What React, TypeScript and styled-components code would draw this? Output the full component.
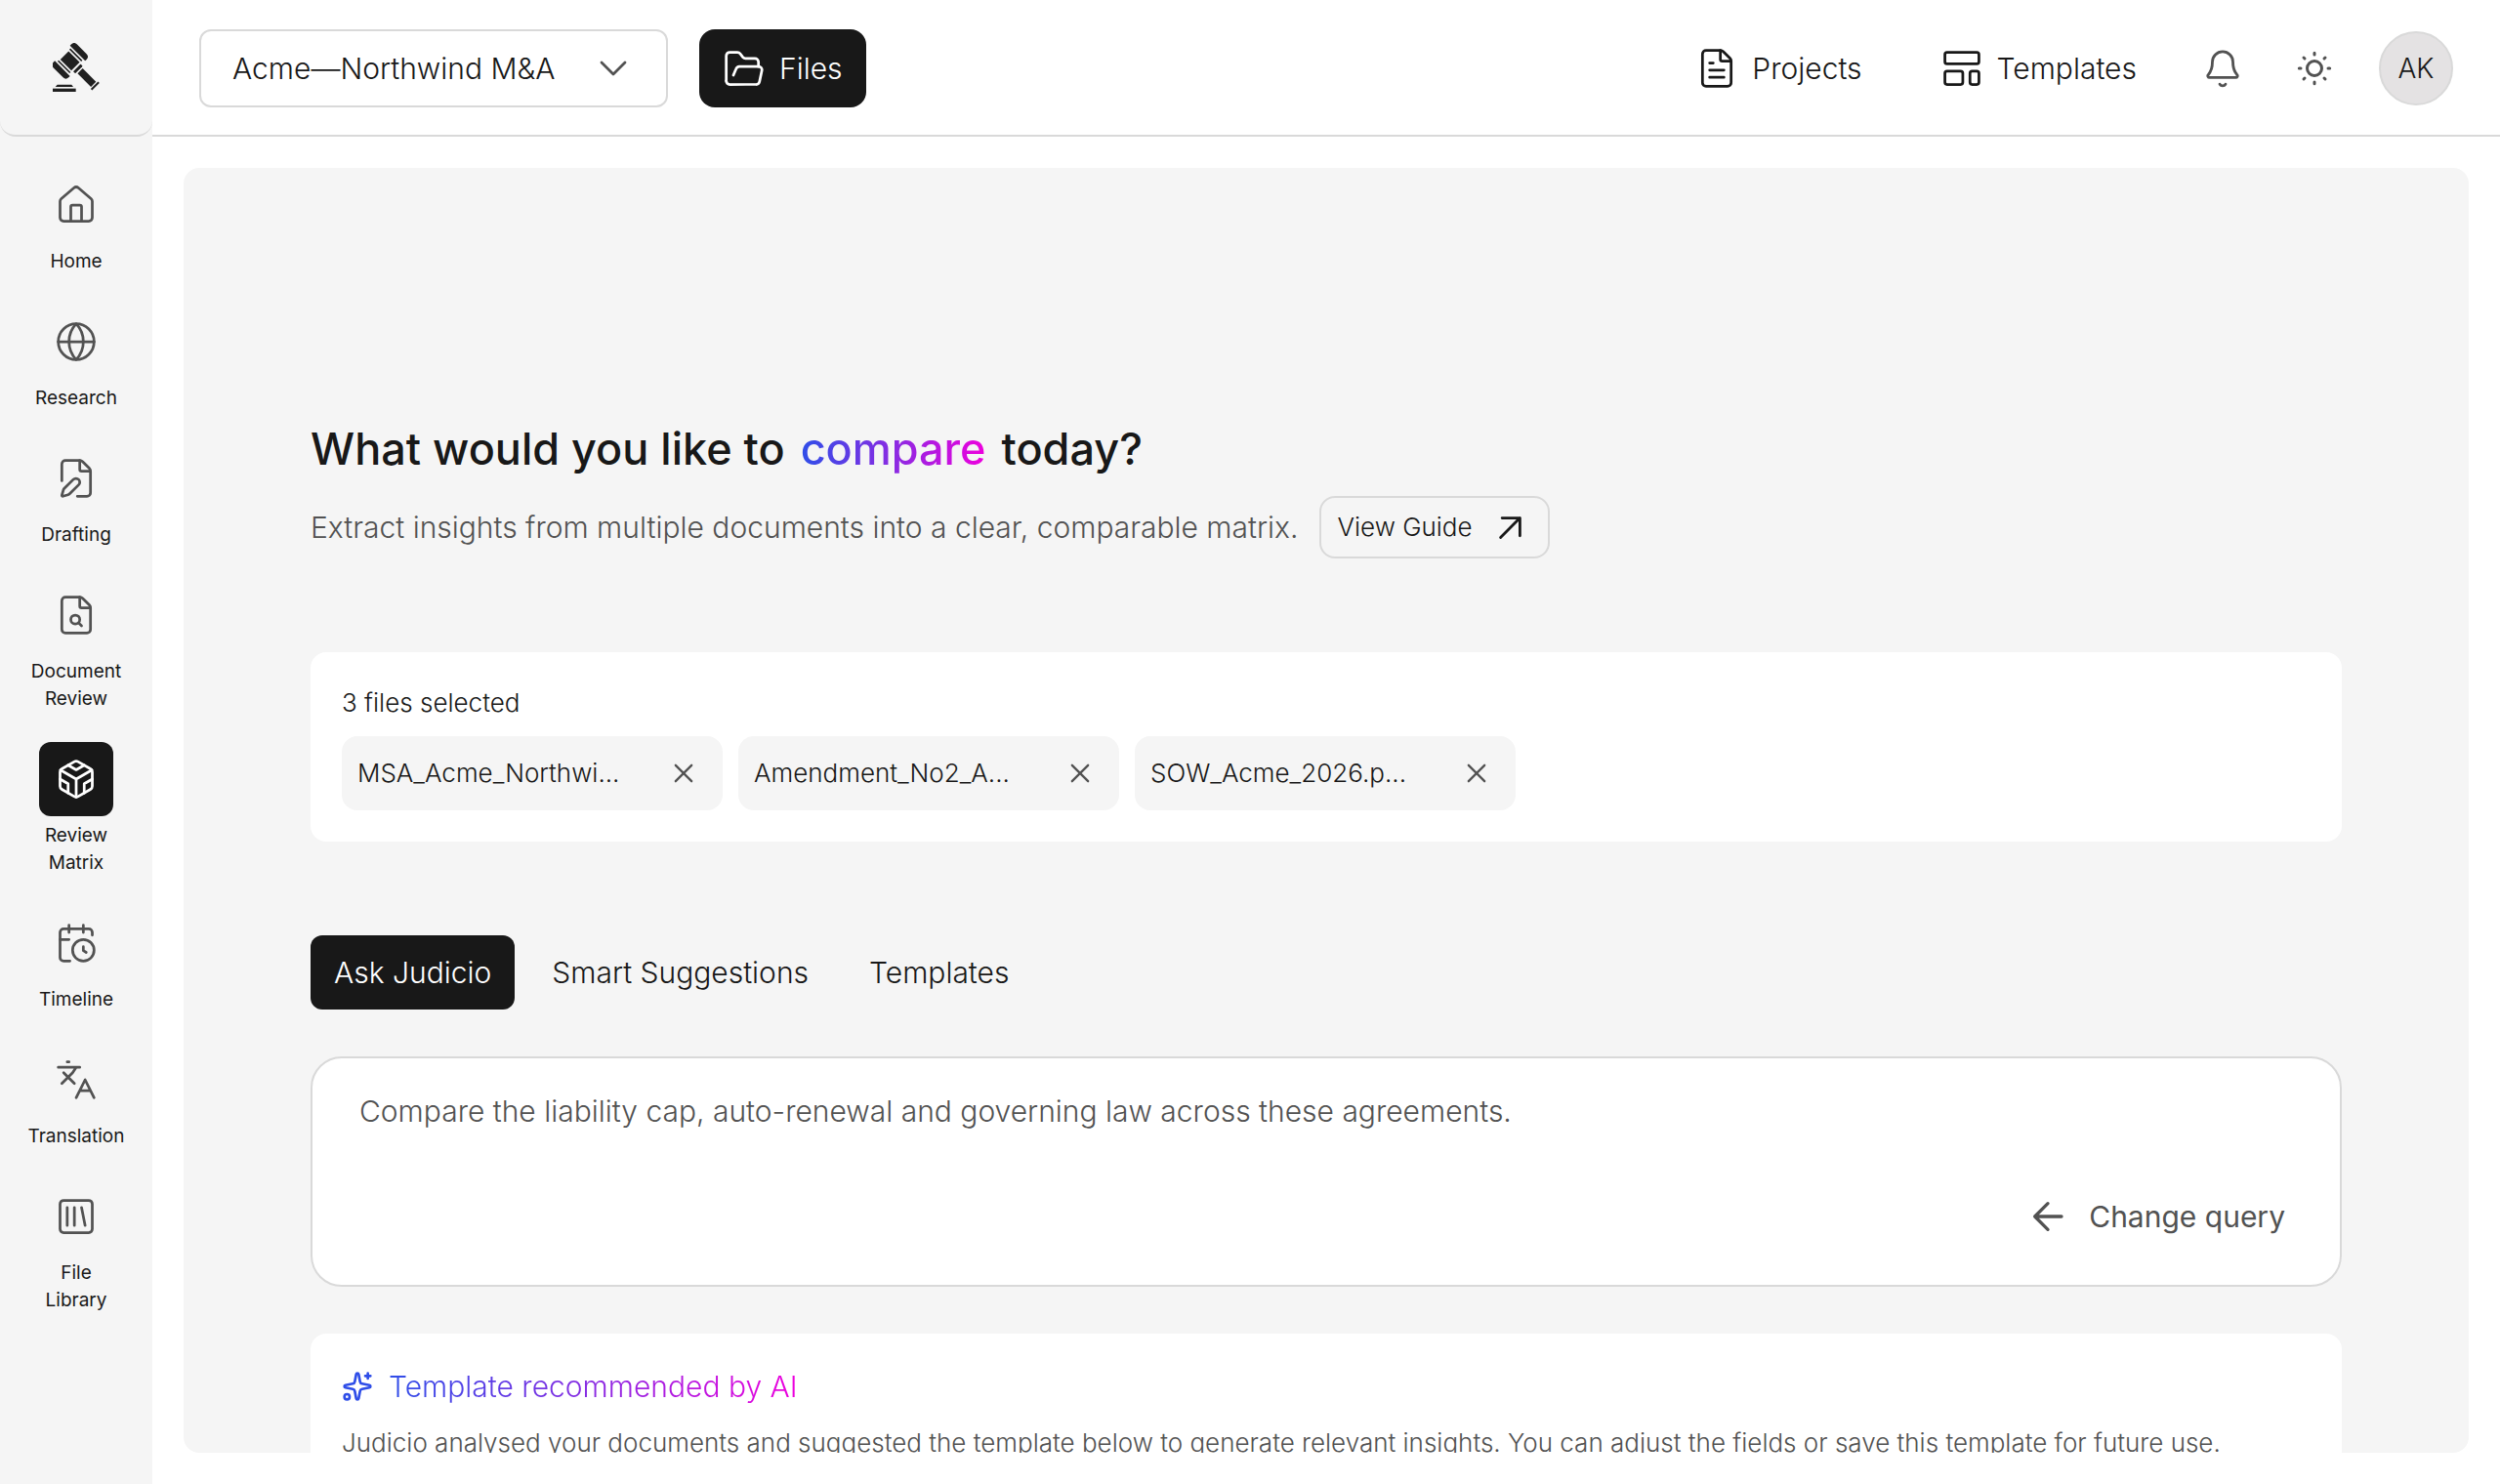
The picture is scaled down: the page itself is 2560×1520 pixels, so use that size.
import React, { useState } from "react";
import styled, { createGlobalStyle, css } from "styled-components";

const color = {
  ink: "#181818",
  muted: "#525252",
  icon: "#525252",
  line: "#d9d9d9",
  surface: "#f5f5f5",
  white: "#ffffff",
};

const brandGradient = "linear-gradient(90deg, #2f4ee8 0%, #8a2be2 50%, #ee00dd 100%)";

const GlobalStyle = createGlobalStyle`
  *, *::before, *::after { box-sizing: border-box; }
  body {
    margin: 0;
    background: ${color.white};
    color: ${color.ink};
    font-family: Inter, "Liberation Sans", sans-serif;
    font-weight: 300;
    font-size: 30px;
    line-height: 40px;
  }
  button, select, textarea { font: inherit; color: inherit; }
  button { border: 0; background: none; padding: 0; cursor: pointer; }
  h1, h2, p, ul { margin: 0; padding: 0; }
`;

/* ---------- icons ---------- */

const Glyph = styled.svg<{ $size: number; $stroke: number }>`
  width: ${(p) => p.$size}px;
  height: ${(p) => p.$size}px;
  flex: none;
  fill: none;
  stroke: currentColor;
  stroke-width: ${(p) => p.$stroke};
  stroke-linecap: round;
  stroke-linejoin: round;
`;

const fileOutline = (
  <>
    <path d="M6 22a2 2 0 0 1-2-2V4a2 2 0 0 1 2-2h8a2.4 2.4 0 0 1 1.704.706l3.588 3.588A2.4 2.4 0 0 1 20 8v12a2 2 0 0 1-2 2z" />
    <path d="M14 2v5a1 1 0 0 0 1 1h5" />
  </>
);

const drawings = {
  home: (
    <>
      <path d="M15 21v-8a1 1 0 0 0-1-1h-4a1 1 0 0 0-1 1v8" />
      <path d="M3 10a2 2 0 0 1 .709-1.528l7-5.999a2 2 0 0 1 2.582 0l7 5.999A2 2 0 0 1 21 10v9a2 2 0 0 1-2 2H5a2 2 0 0 1-2-2z" />
    </>
  ),
  globe: (
    <>
      <circle cx="12" cy="12" r="10" />
      <path d="M12 2a14.5 14.5 0 0 0 0 20 14.5 14.5 0 0 0 0-20" />
      <path d="M2 12h20" />
    </>
  ),
  draft: (
    <>
      <path d="M12.659 22H18a2 2 0 0 0 2-2V8a2.4 2.4 0 0 0-.706-1.706l-3.588-3.588A2.4 2.4 0 0 0 14 2H6a2 2 0 0 0-2 2v9.34" />
      <path d="M14 2v5a1 1 0 0 0 1 1h5" />
      <path d="M10.378 12.622a1 1 0 0 1 3 3.003L8.36 20.637a2 2 0 0 1-.854.506l-2.867.837a.5.5 0 0 1-.62-.62l.836-2.869a2 2 0 0 1 .506-.853z" />
    </>
  ),
  fileSearch: (
    <>
      {fileOutline}
      <circle cx="11.5" cy="14.5" r="2.5" />
      <path d="M13.3 16.3 15 18" />
    </>
  ),
  fileText: (
    <>
      {fileOutline}
      <path d="M10 9H8M16 13H8M16 17H8" />
    </>
  ),
  matrix: (
    <>
      <path d="M21 16V8a2 2 0 0 0-1-1.73l-7-4a2 2 0 0 0-2 0l-7 4A2 2 0 0 0 3 8v8a2 2 0 0 0 1 1.73l7 4a2 2 0 0 0 2 0l7-4A2 2 0 0 0 21 16z" />
      <path d="M7.5 4.21 12 6.81l4.5-2.6M7.5 19.79V14.6L3 12M21 12l-4.5 2.6v5.19M3.27 6.96 12 12.01l8.73-5.05M12 22.08V12" />
    </>
  ),
  timeline: (
    <>
      <path d="M16 14v2.2l1.6 1M16 2v4M8 2v4M3 10h5" />
      <path d="M21 7.5V6a2 2 0 0 0-2-2H5a2 2 0 0 0-2 2v14a2 2 0 0 0 2 2h3.5" />
      <circle cx="16" cy="16" r="6" />
    </>
  ),
  translate: <path d="m5 8 6 6M4 14l6-6 2-3M2 5h12M7 2h1M22 22l-5-10-5 10M14 18h6" />,
  library: (
    <>
      <rect x="3" y="3" width="18" height="18" rx="2" />
      <path d="M7 7v10M11 7v10M15 7l2 10" />
    </>
  ),
  folder: (
    <>
      <path d="M2 19V5a2 2 0 0 1 2-2h4.2a2 2 0 0 1 1.6.8l1.5 2A2 2 0 0 0 13 6.5h5a2 2 0 0 1 2 2V11" />
      <path d="M6 15.8l1.5-3.5A2 2 0 0 1 9.3 11H20a1.8 1.8 0 0 1 1.9 2.2l-1.3 6.2A2 2 0 0 1 18.6 21H4a2 2 0 0 1-2-2" />
    </>
  ),
  templates: (
    <>
      <rect x="2.5" y="3" width="19" height="6.5" rx="1.2" />
      <rect x="2.5" y="13.5" width="10" height="7.5" rx="1.2" />
      <rect x="16.5" y="13.5" width="5" height="7.5" rx="1.2" />
    </>
  ),
  bell: (
    <>
      <path d="M10.3 21.3a2 2 0 0 0 3.400 0" />
      <path d="M3.6 15.7A1 1 0 0 0 4.3 17.4h15.4a1 1 0 0 0 .7-1.7C19.1 14.3 18 12.9 18 8.2a6 6 0 0 0-12 0c0 4.7-1.1 6.1-2.4 7.5z" />
    </>
  ),
  sun: (
    <>
      <circle cx="12" cy="12" r="4.5" />
      <path d="M12 2.600v1M12 20.400v1M2.600 12h1M20.400 12h1M5.400 5.400l.6.6M18 18l.6.6M5.400 18.600l.6-.6M18 6l.6-.6" />
    </>
  ),
  chevron: <path d="m6 9 6 6 6-6" />,
  cross: <path d="M5 5 19 19M19 5 5 19" />,
  upRight: <path d="M2.5 21.5 21.5 2.5M4 2.5h17.5V20" />,
  back: <path d="M22.5 12H2M12 2 2 12l10 10" />,
  sparkle: (
    <>
      <path d="M11.017 2.814a1 1 0 0 1 1.966 0l1.051 5.558a2 2 0 0 0 1.594 1.594l5.558 1.051a1 1 0 0 1 0 1.966l-5.558 1.051a2 2 0 0 0-1.594 1.594l-1.051 5.558a1 1 0 0 1-1.966 0l-1.051-5.558a2 2 0 0 0-1.594-1.594l-5.558-1.051a1 1 0 0 1 0-1.966l5.558-1.051a2 2 0 0 0 1.594-1.594z" />
      <path d="M20 2v4M22 4h-4" />
      <circle cx="4" cy="20" r="2" />
    </>
  ),
};

type IconName = keyof typeof drawings;

function Icon({ name, size = 44, stroke = 1.5 }: { name: IconName; size?: number; stroke?: number }) {
  return (
    <Glyph viewBox="0 0 24 24" $size={size} $stroke={stroke} aria-hidden="true">
      {drawings[name]}
    </Glyph>
  );
}

const LogoSvg = styled.svg`
  width: 48px;
  height: 50px;
  fill: #202020;
`;

function Gavel() {
  return (
    <LogoSvg viewBox="0 0 144 150" role="img" aria-label="Judicio">
      <g transform="translate(53 55) rotate(45)">
        <path d="M-33-33v-6a12 12 0 0 1 12-12h42a12 12 0 0 1 12 12v6z" />
        <rect x="-26" y="-28" width="52" height="5" />
        <rect x="-24" y="-18" width="48" height="36" />
        <rect x="-26" y="23" width="52" height="5" />
        <path d="M-33 33v6a12 12 0 0 0 12 12h42a12 12 0 0 0 12-12v-6z" />
        <rect x="30" y="-16" width="9" height="32" rx="2" />
        <rect x="44" y="-11" width="58" height="22" />
        <rect x="106" y="-16" width="6" height="32" />
      </g>
      <path d="M14 128h44l5 7H8z" />
      <rect x="0" y="140" width="71" height="10" />
    </LogoSvg>
  );
}

/* ---------- shell ---------- */

const Shell = styled.div`
  display: grid;
  grid-template-columns: 156px minmax(0, 1fr);
  height: 100vh;
  overflow: hidden;
`;

const Sidebar = styled.aside`
  display: flex;
  flex-direction: column;
  background: ${color.surface};
`;

const LogoBox = styled.div`
  display: flex;
  align-items: center;
  justify-content: center;
  height: 140px;
  flex: none;
  border-bottom: 2px solid ${color.line};
  border-radius: 0 0 16px 16px;
`;

const SideList = styled.ul`
  display: flex;
  flex-direction: column;
  gap: 30px;
  padding-top: 32px;
  list-style: none;
`;

const SideLink = styled.a`
  display: flex;
  flex-direction: column;
  align-items: center;
  gap: 6px;
  color: ${color.ink};
  font-size: 19px;
  font-weight: 400;
  line-height: 28px;
  text-align: center;
  text-decoration: none;
`;

const SideIcon = styled.span<{ $active: boolean }>`
  display: flex;
  align-items: center;
  justify-content: center;
  width: 76px;
  height: 76px;
  border-radius: 12px;
  color: ${(p) => (p.$active ? color.white : color.icon)};
  background: ${(p) => (p.$active ? color.ink : "transparent")};
`;

const SideLabel = styled.span`
  width: min-content;
`;

const Main = styled.div`
  display: flex;
  flex-direction: column;
  min-height: 0;
`;

const Header = styled.header`
  display: flex;
  align-items: center;
  flex: none;
  gap: 32px;
  height: 140px;
  padding: 2px 48px 0;
  border-bottom: 2px solid ${color.line};
`;

const SelectWrap = styled.label`
  display: grid;
  grid-template-areas: "field";
  align-items: center;
  width: 480px;

  svg {
    grid-area: field;
    justify-self: end;
    margin-right: 32px;
    color: ${color.icon};
    pointer-events: none;
  }
`;

const Select = styled.select`
  grid-area: field;
  width: 100%;
  height: 80px;
  padding: 0 96px 0 32px;
  border: 2px solid ${color.line};
  border-radius: 12px;
  background: ${color.white};
  appearance: none;
`;

const FilesButton = styled.button`
  display: flex;
  align-items: center;
  gap: 14px;
  height: 80px;
  padding: 0 24px;
  border-radius: 16px;
  background: ${color.ink};
  color: ${color.white};
`;

const TopNav = styled.nav`
  display: flex;
  gap: 80px;
  margin-left: auto;
`;

const TopLink = styled.a`
  display: flex;
  align-items: center;
  gap: 14px;
  color: ${color.ink};
  text-decoration: none;
`;

const Actions = styled.div`
  display: flex;
  align-items: center;
  gap: 38px;
  margin-left: 28px;
`;

const IconButton = styled.button`
  display: flex;
  align-items: center;
  justify-content: center;
  width: 56px;
  height: 56px;
  color: ${color.icon};
`;

const Avatar = styled.button`
  width: 76px;
  height: 76px;
  border: 2px solid ${color.line};
  border-radius: 50%;
  background: #e4e2e3;
  font-size: 28px;
`;

/* ---------- content ---------- */

const Panel = styled.main`
  flex: 1;
  min-height: 0;
  margin: 32px;
  padding: 256px 130px 0;
  overflow: hidden;
  border-radius: 16px;
  background: ${color.surface};
`;

const Title = styled.h1`
  font-size: 45px;
  font-weight: 500;
  line-height: 64px;
`;

const gradientText = css`
  background: ${brandGradient};
  background-clip: text;
  -webkit-background-clip: text;
  color: transparent;
`;

const Highlight = styled.span`
  ${gradientText}
  margin: 0 4px;
`;

const Intro = styled.div`
  display: flex;
  align-items: center;
  gap: 22px;
  margin-top: 16px;
  color: ${color.muted};
`;

const GuideButton = styled.button`
  display: flex;
  align-items: center;
  gap: 26px;
  height: 64px;
  padding: 0 26px 0 16px;
  border: 2px solid ${color.line};
  border-radius: 16px;
  color: ${color.ink};
  font-size: 26px;
`;

const FilesCard = styled.section`
  margin-top: 96px;
  padding: 32px;
  border-radius: 16px;
  background: ${color.white};
  font-size: 26px;
`;

const ChipRow = styled.ul`
  display: flex;
  gap: 16px;
  margin-top: 14px;
  list-style: none;
`;

const Chip = styled.li`
  display: flex;
  align-items: center;
  justify-content: space-between;
  width: 390px;
  height: 76px;
  padding: 0 16px;
  border-radius: 16px;
  background: ${color.surface};
`;

const RemoveButton = styled.button`
  display: flex;
  align-items: center;
  justify-content: center;
  width: 48px;
  height: 48px;
  color: ${color.icon};
`;

const Tabs = styled.div`
  display: flex;
  gap: 14px;
  margin-top: 96px;
`;

const Tab = styled.button<{ $active: boolean }>`
  height: 76px;
  padding: 0 24px;
  border-radius: 12px;
  background: ${(p) => (p.$active ? color.ink : "transparent")};
  color: ${(p) => (p.$active ? color.white : color.ink)};
`;

const QueryCard = styled.section`
  display: flex;
  flex-direction: column;
  margin-top: 48px;
  padding: 34px 48px;
  border: 2px solid ${color.line};
  border-radius: 32px;
  background: ${color.white};
  color: ${color.muted};
`;

const QueryInput = styled.textarea`
  display: block;
  width: 100%;
  height: 80px;
  padding: 0;
  border: 0;
  outline: 0;
  resize: none;
  background: transparent;
`;

const ChangeButton = styled.button`
  display: flex;
  align-items: center;
  align-self: flex-end;
  gap: 26px;
  height: 64px;
  margin: 16px 8px 4px 0;
  font-weight: 400;
`;

const AdviceCard = styled.section`
  margin-top: 48px;
  padding: 32px;
  border-radius: 16px;
  background: ${color.white};
`;

const AdviceTitle = styled.div`
  display: flex;
  align-items: center;
  gap: 16px;
  height: 44px;
  color: #2f4ee8;
`;

const AdviceHeading = styled.h2`
  ${gradientText}
  font-size: 30px;
  font-weight: 300;
`;

const AdviceText = styled.p`
  margin-top: 16px;
  color: ${color.muted};
  font-size: 26px;
`;

const sideItems: { label: string; icon: IconName }[] = [
  { label: "Home", icon: "home" },
  { label: "Research", icon: "globe" },
  { label: "Drafting", icon: "draft" },
  { label: "Document Review", icon: "fileSearch" },
  { label: "Review Matrix", icon: "matrix" },
  { label: "Timeline", icon: "timeline" },
  { label: "Translation", icon: "translate" },
  { label: "File Library", icon: "library" },
];

const files = ["MSA_Acme_Northwi...", "Amendment_No2_A...", "SOW_Acme_2026.p..."];
const tabs = ["Ask Judicio", "Smart Suggestions", "Templates"];

export default function App() {
  const [tab, setTab] = useState(tabs[0]);

  return (
    <>
      <GlobalStyle />
      <Shell>
        <Sidebar>
          <LogoBox>
            <Gavel />
          </LogoBox>
          <nav aria-label="Workspace">
            <SideList>
              {sideItems.map(({ label, icon }) => (
                <li key={label}>
                  <SideLink href="#">
                    <SideIcon $active={icon === "matrix"}>
                      <Icon name={icon} />
                    </SideIcon>
                    <SideLabel>{label}</SideLabel>
                  </SideLink>
                </li>
              ))}
            </SideList>
          </nav>
        </Sidebar>

        <Main>
          <Header>
            <SelectWrap>
              <Select aria-label="Project">
                <option>Acme—Northwind M&amp;A</option>
              </Select>
              <Icon name="chevron" size={48} stroke={1.4} />
            </SelectWrap>
            <FilesButton type="button">
              <Icon name="folder" />
              Files
            </FilesButton>
            <TopNav aria-label="Main">
              <TopLink href="#">
                <Icon name="fileText" />
                Projects
              </TopLink>
              <TopLink href="#">
                <Icon name="templates" />
                Templates
              </TopLink>
            </TopNav>
            <Actions>
              <IconButton type="button" aria-label="Notifications">
                <Icon name="bell" size={42} stroke={1.6} />
              </IconButton>
              <IconButton type="button" aria-label="Light theme">
                <Icon name="sun" size={40} stroke={1.8} />
              </IconButton>
              <Avatar type="button">AK</Avatar>
            </Actions>
          </Header>

          <Panel>
            <Title>
              What would you like to <Highlight>compare</Highlight> today?
            </Title>
            <Intro>
              <p>Extract insights from multiple documents into a clear, comparable matrix.</p>
              <GuideButton type="button">
                View Guide
                <Icon name="upRight" size={25} stroke={2.7} />
              </GuideButton>
            </Intro>

            <FilesCard>
              <p>3 files selected</p>
              <ChipRow>
                {files.map((name) => (
                  <Chip key={name}>
                    {name}
                    <RemoveButton type="button" aria-label={`Remove ${name}`}>
                      <Icon name="cross" size={28} stroke={2} />
                    </RemoveButton>
                  </Chip>
                ))}
              </ChipRow>
            </FilesCard>

            <Tabs role="tablist">
              {tabs.map((name) => (
                <Tab
                  key={name}
                  type="button"
                  role="tab"
                  aria-selected={name === tab}
                  $active={name === tab}
                  onClick={() => setTab(name)}
                >
                  {name}
                </Tab>
              ))}
            </Tabs>

            <QueryCard>
              <QueryInput
                aria-label="Query"
                defaultValue="Compare the liability cap, auto-renewal and governing law across these agreements."
              />
              <ChangeButton type="button">
                <Icon name="back" size={32} stroke={2.5} />
                Change query
              </ChangeButton>
            </QueryCard>

            <AdviceCard>
              <AdviceTitle>
                <Icon name="sparkle" size={32} stroke={2} />
                <AdviceHeading>Template recommended by AI</AdviceHeading>
              </AdviceTitle>
              <AdviceText>
                Judicio analysed your documents and suggested the template below to generate relevant insights. You can
                adjust the fields or save this template for future use.
              </AdviceText>
            </AdviceCard>
          </Panel>
        </Main>
      </Shell>
    </>
  );
}
